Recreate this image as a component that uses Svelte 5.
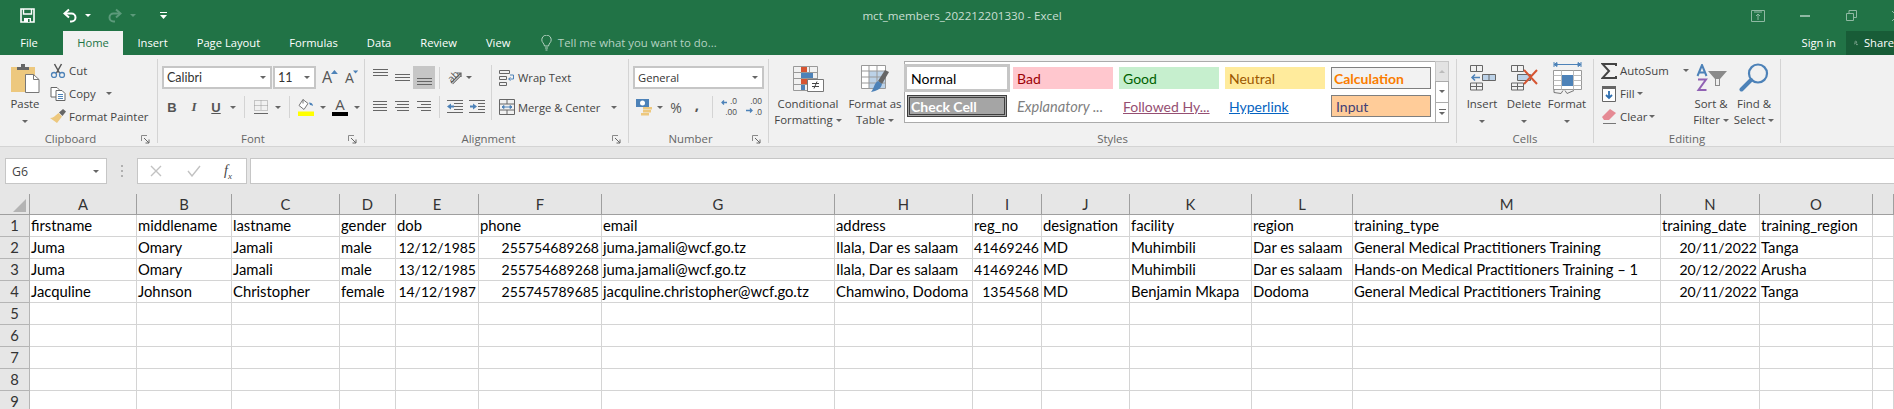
<script>
  const tabs = ["Home", "Insert", "Page Layout", "Formulas", "Data", "Review", "View"];
  const cols = ["A", "B", "C", "D", "E", "F", "G", "H", "I", "J", "K", "L", "M", "N", "O", ""];

  const rows = [
    ["firstname", "middlename", "lastname", "gender", "dob", "phone", "email", "address", "reg_no", "designation", "facility", "region", "training_type", "training_date", "training_region", ""],
    ["Juma", "Omary", "Jamali", "male", "12/12/1985", "255754689268", "juma.jamali@wcf.go.tz", "Ilala, Dar es salaam", "41469246", "MD", "Muhimbili", "Dar es salaam", "General Medical Practitioners Training", "20/11/2022", "Tanga", ""],
    ["Juma", "Omary", "Jamali", "male", "13/12/1985", "255754689268", "juma.jamali@wcf.go.tz", "Ilala, Dar es salaam", "41469246", "MD", "Muhimbili", "Dar es salaam", "Hands-on Medical Practitioners Training – 1", "20/12/2022", "Arusha", ""],
    ["Jacquline", "Johnson", "Christopher", "female", "14/12/1987", "255745789685", "jacquline.christopher@wcf.go.tz", "Chamwino, Dodoma", "1354568", "MD", "Benjamin Mkapa", "Dodoma", "General Medical Practitioners Training", "20/11/2022", "Tanga", ""],
    [], [], [], [], []
  ];

  const rightCols = [4, 5, 8, 13];
  const isRight = (r, c) => r > 0 && rightCols.includes(c);
</script>

{#snippet launcher()}
  <span class="launcher">
    <svg width="9" height="9" viewBox="0 0 9 9"><path d="M.5 6V.5H6" fill="none" stroke="#8a8a8a"/><path d="M3 3l5 5M8 4.5V8H4.5" fill="none" stroke="#666"/></svg>
  </span>
{/snippet}

{#snippet lines(a, b, c, d)}
  <svg width="16" height="14" viewBox="0 0 16 14">
    <path d="M{a} 1.5H15M{b} 4.5H15M{c} 7.5H15M{d} 10.5H15" stroke="#666" />
  </svg>
{/snippet}

<div class="app">
  <header class="titlebar">
    <div class="qat">
      <svg class="save" width="15" height="15" viewBox="0 0 15 15"><path d="M1 1h13v13H1z" fill="none" stroke="#fff" stroke-width="1.6"/><path d="M3.5 1v5h8V1" fill="none" stroke="#fff" stroke-width="1.4"/><path d="M4 10h7v4H4z" fill="#fff"/><path d="M8 11h1.6v3H8z" fill="#217346"/></svg>
      <svg class="undo" width="16" height="15" viewBox="0 0 16 15"><path d="M7 1.5L2.5 5.5 7 9.5" fill="none" stroke="#fff" stroke-width="2"/><path d="M3 5.5h6.5a4 4 0 0 1 0 8H8" fill="none" stroke="#fff" stroke-width="2"/></svg>
      <span class="caret white undo-caret"></span>
      <svg class="redo" width="16" height="15" viewBox="0 0 16 15"><path d="M9 1.5l4.500 4L9 9.500" fill="none" stroke="#5c9a7b" stroke-width="2"/><path d="M13 5.500H6.500a4 4 0 0 0 0 8H8" fill="none" stroke="#5c9a7b" stroke-width="2"/></svg>
      <span class="caret dim redo-caret"></span>
      <svg class="custom" width="7" height="8" viewBox="0 0 7 8"><path d="M0 .5h7" stroke="#fff"/><path d="M0 3h7L3.500 7z" fill="#fff"/></svg>
    </div>
    <div class="doc-title">mct_members_202212201330 - Excel</div>
    <div class="winctl">
      <span class="wbtn first">
        <svg width="14" height="12" viewBox="0 0 14 12"><path d="M.5.5h13v11H.5z" fill="none" stroke="#8fb9a3"/><path d="M3 2h8M7 10V4M5 6l2-2 2 2" fill="none" stroke="#8fb9a3"/></svg>
      </span>
      <span class="wbtn min">
        <svg width="10" height="2" viewBox="0 0 10 2"><path d="M0 1h10" stroke="#8fb9a3" stroke-width="2"/></svg>
      </span>
      <span class="wbtn">
        <svg width="11" height="11" viewBox="0 0 11 11"><path d="M.5 3.500h7v7h-7zM3 3.500v-3h7.500v7H7.500" fill="none" stroke="#8fb9a3"/></svg>
      </span>
      <span class="wbtn">
        <svg width="10" height="10" viewBox="0 0 10 10"><path d="M0 0l10 10M10 0L0 10" stroke="#8fb9a3"/></svg>
      </span>
    </div>
  </header>

  <nav class="tabbar">
    <span class="file">File</span>
    {#each tabs as tab, i}
      <span class="tab" class:active={i === 0}>{tab}</span>
    {/each}
    <span class="tell">
      <svg width="11" height="16" viewBox="0 0 11 16"><path d="M3.500 11C3 8 .8 7.500.8 4.800a4.700 4.700 0 0 1 9.400 0C10.200 7.500 8 8 7.500 11zM4 13h3M4.500 15h2" fill="none" stroke="#b5d2c2"/></svg>
      Tell me what you want to do...
    </span>
    <span class="signin">Sign in</span>
    <span class="share">
      <svg width="16" height="18" viewBox="0 0 16 18"><circle cx="7" cy="5.500" r="4" fill="none" stroke="#fff" stroke-width="1.300"/><path d="M1 15c0-4 2.500-5.500 4.500-6M9 9l2 1M9 15h6M12 12v6" fill="none" stroke="#fff" stroke-width="1.300"/></svg>
      Share
    </span>
  </nav>

  <section class="ribbon">
    <div class="group g-clip">
      <div class="body">
        <div class="big paste">
          <div class="big-icon">
            <svg width="29" height="30" viewBox="0 0 29 30">
              <path d="M0 4h24v25H0z" fill="#edc87e" />
              <path d="M6 4h12v3H6zM10 1h4v4h-4z" fill="#666" />
              <path d="M14.500 11.500h8l5.500 5v13H14.500z" fill="#fff" stroke="#777" />
              <path d="M22.500 11.500v5H28" fill="none" stroke="#777" />
            </svg>
          </div>
          <span>Paste</span>
          <span class="line"><span class="caret"></span></span>
        </div>
        <div class="smalls">
          <div class="small">
            <svg width="15" height="15" viewBox="0 0 15 15"><path d="M4 1l5 9M11 1L6 10" stroke="#555" stroke-width="1.500"/><circle cx="3.500" cy="12" r="2.500" fill="none" stroke="#4d82b8" stroke-width="1.300"/><circle cx="11.500" cy="12" r="2.500" fill="none" stroke="#4d82b8" stroke-width="1.300"/></svg>
            <span>Cut</span>
          </div>
          <div class="small">
            <svg width="15" height="14" viewBox="0 0 15 14"><path d="M.5.5h6l2 2V10H.5z" fill="#fff" stroke="#666"/><path d="M5.500 3.500h6l3 3v7h-9z" fill="#fff" stroke="#666"/><path d="M7.500 7.500h5M7.500 9.500h5M7.500 11.500h5" stroke="#4d82b8"/></svg>
            <span>Copy</span>
            <span class="caret copy-caret"></span>
          </div>
          <div class="small">
            <svg width="16" height="15" viewBox="0 0 16 15"><path d="M8.500 4L12 7.500 7 14 0 9c3 0 5-2 8.500-5z" fill="#edc87e"/><path d="M9 3.500L13 0l3 2.500L12.500 7z" fill="#666"/></svg>
            <span>Format Painter</span>
          </div>
        </div>
      </div>
      <div class="label"><span>Clipboard</span>{@render launcher()}</div>
    </div>

    <div class="group g-font">
      <div class="body stack">
        <div class="row">
          <div class="combo c-font"><span class="lato">Calibri</span><span class="caret"></span></div>
          <div class="combo c-size"><span class="lato">11</span><span class="caret"></span></div>
          <span class="grow-a">A<svg width="7" height="4" viewBox="0 0 7 4"><path d="M0 4l3.500-4L7 4z" fill="#4d82b8"/></svg></span>
          <span class="shrink-a">A<svg width="7" height="4" viewBox="0 0 7 4"><path d="M0 0l3.500 4L7 0z" fill="#4d82b8"/></svg></span>
        </div>
        <div class="row row2 font-tools">
          <span class="slot w22 fmt bold">B</span>
          <span class="slot w22 fmt italic">I</span>
          <span class="slot w22 fmt under">U</span>
          <span class="slot w12"><span class="caret"></span></span>
          <span class="sep s5"></span>
          <span class="slot w22 borders">
            <svg width="14" height="14" viewBox="0 0 14 14"><path d="M.5.500h13v10H.5zM7 .5v10M.5 5.500h13" fill="none" stroke="#999" stroke-dasharray="1 1"/><path d="M0 13.500h14" stroke="#666"/></svg>
          </span>
          <span class="slot w12"><span class="caret"></span></span>
          <span class="sep s5"></span>
          <span class="slot w22 fill">
            <svg width="16" height="17" viewBox="0 0 16 17"><path d="M5 .5l-4 6 5 4 4-6z" fill="#fff" stroke="#777"/><path d="M5 .5v4" stroke="#777"/><path d="M11 3.500c2 0 4 1 4 3.500-1-.5-2-1-3-1z" fill="#4d82b8"/><path d="M0 12.500h16V17H0z" fill="#ffff00"/></svg>
          </span>
          <span class="slot w12"><span class="caret"></span></span>
          <span class="slot w22 color-a"><span>A</span><i></i></span>
          <span class="slot w12"><span class="caret"></span></span>
        </div>
      </div>
      <div class="label"><span>Font</span>{@render launcher()}</div>
    </div>

    <div class="group g-align">
      <div class="body flat">
        <div class="stack left">
          <div class="row">
            <span class="slot w22 valign top"><svg width="15" height="8" viewBox="0 0 15 8"><path d="M0 .5h15M0 3.500h15M0 6.500h15" stroke="#666"/></svg></span>
            <span class="slot w22 valign"><svg width="15" height="8" viewBox="0 0 15 8"><path d="M0 .5h15M0 3.500h15M0 6.500h15" stroke="#666"/></svg></span>
            <span class="slot w22 valign picked"><svg width="15" height="8" viewBox="0 0 15 8"><path d="M0 .5h15M0 3.500h15M0 6.500h15" stroke="#666"/></svg></span>
            <span class="sep s4"></span>
            <span class="slot w22 orient">
              <span class="ab">ab</span>
              <svg width="16" height="16" viewBox="0 0 16 16"><path d="M4 13L14 3M10 3h4v4" fill="none" stroke="#666" stroke-width="1.200"/></svg>
            </span>
            <span class="caret orient-caret"></span>
          </div>
          <div class="row row2">
            <span class="slot w22">{@render lines(1, 1, 1, 1)}</span>
            <span class="slot w22">{@render lines(1, 3, 1, 3)}</span>
            <span class="slot w22">{@render lines(1, 5, 1, 5)}</span>
            <span class="sep s4"></span>
            <span class="slot w22">
              <svg width="16" height="14" viewBox="0 0 16 14"><path d="M0 .5h16M7 3.500h9M7 6.500h9M7 9.500h9M0 12.500h16" stroke="#666"/><path d="M0 6.500L4 3.500v2h3v2H4v2z" fill="#4d82b8"/></svg>
            </span>
            <span class="slot w22">
              <svg width="16" height="14" viewBox="0 0 16 14"><path d="M0 .5h16M9 3.500h7M9 6.500h7M9 9.500h7M0 12.500h16" stroke="#666"/><path d="M8 6.500L4 3.500v2H1v2h3v2z" fill="#4d82b8"/></svg>
            </span>
          </div>
        </div>
        <span class="sep tall"></span>
        <div class="stack">
          <div class="row wrapline">
            <svg width="16" height="16" viewBox="0 0 16 16"><path d="M.5.5h10v3H.5zM.5 6.500h7v3h-7zM.5 12.500h7v3h-7z" fill="none" stroke="#666"/><path d="M11 5h3.500v4H10M11.500 7.500L9.500 9l2 1.500" fill="none" stroke="#4d82b8"/></svg>
            <span>Wrap Text</span>
          </div>
          <div class="row row2 wrapline">
            <svg width="16" height="16" viewBox="0 0 16 16"><path d="M.5.5h15v15H.5zM.5 5h15M.5 11h15M8 .5V5M8 11v4.500" fill="none" stroke="#666"/><path d="M3 8h10M3 8l2-1.500v3zM13 8l-2-1.500v3z" fill="#4d82b8" stroke="#4d82b8"/></svg>
            <span>Merge &amp; Center</span>
            <span class="caret merge-caret"></span>
          </div>
        </div>
      </div>
      <div class="label"><span>Alignment</span>{@render launcher()}</div>
    </div>

    <div class="group g-num">
      <div class="body stack">
        <div class="row">
          <div class="combo c-num"><span class="sm">General</span><span class="caret"></span></div>
        </div>
        <div class="row row2">
          <span class="slot w22">
            <svg width="17" height="17" viewBox="0 0 17 17"><path d="M0 0h13v8H0z" fill="#4d82b8"/><circle cx="6.500" cy="4" r="2.500" fill="#fff"/><path d="M7 8h9v2.500H7zM7 11h8v2.500H7zM5 14h8v2.500H5z" fill="#edc87e"/></svg>
          </span>
          <span class="slot w10"><span class="caret"></span></span>
          <span class="slot w22 glyph percent">%</span>
          <span class="slot w20 glyph comma">,</span>
          <span class="sep s5"></span>
          <span class="slot w22 decs">
            <svg width="16" height="15" viewBox="0 0 16 15"><path d="M1 3.500h5M3 1.500l-2 2 2 2" fill="none" stroke="#4d82b8" stroke-width="1.300"/></svg>
            <span class="dec a">.0</span><span class="dec b">.00</span>
          </span>
          <span class="gap3"></span>
          <span class="slot w22 decs">
            <svg width="16" height="15" viewBox="0 0 16 15"><path d="M0 11.500h6M4 9.500l2 2-2 2" fill="none" stroke="#4d82b8" stroke-width="1.300"/></svg>
            <span class="dec a">.00</span><span class="dec b">.0</span>
          </span>
        </div>
      </div>
      <div class="label"><span>Number</span>{@render launcher()}</div>
    </div>

    <div class="group g-styles">
      <div class="body flat">
        <div class="big cond">
          <div class="big-icon">
            <svg width="31" height="26" viewBox="0 0 31 26">
              <path d="M.5.500h24v24H.5zM8.500.5v24M16.500.5v24M.5 6.500h24M.5 12.500h24M.5 18.500h24" fill="none" stroke="#999"/>
              <path d="M8 1h6v5H8z" fill="#d65532"/><path d="M8 7h12v5H8z" fill="#4d82b8"/><path d="M8 13h9v5H8z" fill="#d65532"/><path d="M8 19h4v5H8z" fill="#4d82b8"/>
              <path d="M14.500 13.500h16v12h-16z" fill="#fff" stroke="#777"/><path d="M19 17.500h7M19 20.500h7M24 15.500l-3 7" stroke="#444"/>
            </svg>
          </div>
          <span>Conditional</span>
          <span>Formatting<span class="caret inl"></span></span>
        </div>
        <div class="big astable">
          <div class="big-icon">
            <svg width="29" height="28" viewBox="0 0 29 28">
              <path d="M.5.500h24v23H.5z" fill="#fff" stroke="#999"/>
              <path d="M8 6h16v17H8z" fill="#bcd2e8"/>
              <path d="M.5 6h24M.5 12h24M.5 18h24M8 .5v23M16 .5v23" stroke="#999"/>
              <path d="M28 7L21 19l-4-3 7-11z" fill="#666"/>
              <path d="M17 16l4 3c-1 5-5 7-11 8 3-3 3-9 7-11z" fill="#4d82b8"/>
            </svg>
          </div>
          <span>Format as</span>
          <span>Table<span class="caret inl"></span></span>
        </div>
        <div class="gallery">
          <div class="swatches">
            <span class="cell normal">Normal</span>
            <span class="cell bad">Bad</span>
            <span class="cell good">Good</span>
            <span class="cell neutral">Neutral</span>
            <span class="cell calc">Calculation</span>
            <span class="cell check">Check Cell</span>
            <span class="cell expl">Explanatory ...</span>
            <span class="cell followed"><u>Followed Hy...</u></span>
            <span class="cell link"><u>Hyperlink</u></span>
            <span class="cell input">Input</span>
          </div>
          <div class="scroll">
            <span class="off"><span class="caret up pale"></span></span>
            <span><span class="caret"></span></span>
            <span class="more"><i></i><span class="caret"></span></span>
          </div>
        </div>
      </div>
      <div class="label"><span>Styles</span></div>
    </div>

    <div class="group g-cells">
      <div class="body flat">
        <div class="big cellbtn">
          <div class="big-icon">
            <svg width="27" height="27" viewBox="0 0 27 27"><path d="M1.500 1.500h12v6h-12zM7.500 1.500v6M1.500 19h12v7h-12zM1.500 22.500h12M7.500 19v7" fill="none" stroke="#666"/><path d="M13.500 10.500h13v6h-13zM20 10.500v6" fill="#bcd2e8" stroke="#666"/><path d="M11 13.500H3M6 10.500l-3 3 3 3" fill="none" stroke="#4d82b8" stroke-width="1.500"/></svg>
          </div>
          <span>Insert</span>
          <span class="line"><span class="caret"></span></span>
        </div>
        <div class="big cellbtn">
          <div class="big-icon">
            <svg width="29" height="27" viewBox="0 0 29 27"><path d="M1.500 1.500h12v6h-12zM7.500 1.500v6M1.500 19h12v7h-12zM1.500 22.500h12M7.500 19v7" fill="none" stroke="#666"/><path d="M7.500 10.500h13v6h-13z" fill="#bcd2e8" stroke="#666"/><path d="M14 6l13 14M27 6L14 20" stroke="#d65532" stroke-width="2"/></svg>
          </div>
          <span>Delete</span>
          <span class="line"><span class="caret"></span></span>
        </div>
        <div class="big cellbtn fmtbtn">
          <div class="big-icon">
            <svg width="29" height="33" viewBox="0 0 29 33"><path d="M1 3.500h27M1 1v5M28 1v5M1 3.500l3-2v4zM28 3.500l-3-2v4z" fill="#4d82b8" stroke="#4d82b8"/><path d="M.5 9.500h28v19H.5z" fill="#fff" stroke="#999"/><path d="M.5 14.500h28M.5 19.500h28M.5 24.500h28M8.500 9.500v19M20.500 9.500v19" stroke="#bbb"/><path d="M9 14h11v11H9z" fill="#4d82b8"/><path d="M1 28.500v3l7 1 2-3M12 29.500l2 3 7-3" fill="none" stroke="#777"/></svg>
          </div>
          <span>Format</span>
          <span class="line"><span class="caret"></span></span>
        </div>
      </div>
      <div class="label"><span>Cells</span></div>
    </div>

    <div class="group g-edit">
      <div class="body flat">
        <div class="smalls">
          <div class="small">
            <svg width="16" height="16" viewBox="0 0 16 16"><path d="M15 3V1H1.500L8 8l-6.500 7H15v-2" fill="none" stroke="#444" stroke-width="2"/></svg>
            <span>AutoSum</span>
            <span class="caret sum-caret"></span>
          </div>
          <div class="small">
            <svg width="16" height="16" viewBox="0 0 16 16"><path d="M1.500.5h13v15h-13z" fill="#fff" stroke="#666"/><path d="M1 0h14v3H1z" fill="#666"/><path d="M8 5v7M5 9l3 3 3-3" fill="none" stroke="#2f6fb0" stroke-width="1.800"/></svg>
            <span>Fill</span>
            <span class="caret fill-caret"></span>
          </div>
          <div class="small">
            <svg width="16" height="15" viewBox="0 0 16 15"><path d="M9 0l6 4-7 7H3L1 8z" fill="#e58a94"/><path d="M2 14.500h13" stroke="#777"/></svg>
            <span>Clear</span>
            <span class="caret fill-caret"></span>
          </div>
        </div>
        <div class="big sortbtn">
          <div class="big-icon">
            <svg width="31" height="28" viewBox="0 0 31 28">
              <path d="M1.500 12L6 1l4.500 11M3 8.500h6" fill="none" stroke="#4d82b8" stroke-width="2"/>
              <path d="M2 15.500h8L2.500 26h8" fill="none" stroke="#9162b4" stroke-width="2"/>
              <path d="M12 7h19l-7 8v7h-5v-7z" fill="#8a8a8a"/><path d="M20 15h3v6h-3z" fill="#eee"/>
            </svg>
          </div>
          <span>Sort &amp;</span>
          <span>Filter<span class="caret inl"></span></span>
        </div>
        <div class="big findbtn">
          <div class="big-icon">
            <svg width="30" height="29" viewBox="0 0 30 29"><circle cx="19" cy="10.500" r="9" fill="none" stroke="#4d82b8" stroke-width="2.200"/><path d="M12 17L2.500 26.500" stroke="#4d82b8" stroke-width="4" stroke-linecap="round"/></svg>
          </div>
          <span>Find &amp;</span>
          <span>Select<span class="caret inl"></span></span>
        </div>
      </div>
      <div class="label"><span>Editing</span></div>
    </div>
  </section>

  <section class="formula">
    <div class="namebox"><span>G6</span><span class="caret"></span></div>
    <svg class="grip" width="3" height="12" viewBox="0 0 3 12"><path d="M1 0h2v2H1zM1 5h2v2H1zM1 10h2v2H1z" fill="#b0b0b0"/></svg>
    <div class="fxbox">
      <svg width="12" height="12" viewBox="0 0 12 12"><path d="M1 1l10 10M11 1L1 11" stroke="#c2c2c2" stroke-width="1.400"/></svg>
      <svg width="14" height="12" viewBox="0 0 14 12"><path d="M1 6l4 5 8-10" fill="none" stroke="#c2c2c2" stroke-width="1.400"/></svg>
      <span class="fx">f<sub>x</sub></span>
    </div>
    <div class="fxinput"></div>
  </section>

  <section class="sheet">
    <div class="corner">
      <svg width="13" height="13" viewBox="0 0 13 13"><path d="M13 0v13H0z" fill="#b4b4b4"/></svg>
    </div>
    {#each cols as col}
      <div class="colhead">{col}</div>
    {/each}
    {#each rows as row, r}
      <div class="rowhead">{r + 1}</div>
      {#each cols as _, c}
        <div class="cell-d" class:right={isRight(r, c)}>{row[c] ?? ""}</div>
      {/each}
    {/each}
  </section>
</div>

<style>
  :global(body) {
    margin: 0;
    background: #fff;
  }
  .app {
    width: 1894px;
    height: 409px;
    overflow: hidden;
    font-family: "Open Sans", sans-serif;
    font-size: 11.4px;
    color: #444;
  }

  .titlebar {
    height: 31px;
    background: #217346;
    display: flex;
    align-items: center;
    width: 1950px;
  }
  .qat {
    width: 172px;
    flex: none;
    display: flex;
    align-items: center;
    padding-left: 20px;
    box-sizing: border-box;
  }
  .undo { margin-left: 27px; }
  .undo-caret { margin-left: 7px; }
  .redo { margin-left: 16px; }
  .redo-caret { margin-left: 7px; }
  .custom { margin-left: 24px; }
  .doc-title {
    width: 1572px;
    flex: none;
    box-sizing: border-box;
    padding-left: 8px;
    text-align: center;
    color: #c9dfd3;
    font-size: 11.6px;
  }
  .winctl {
    display: flex;
    align-items: center;
  }
  .wbtn {
    width: 46px;
    display: flex;
    justify-content: center;
  }
  .wbtn.first { width: 28px; }
  .wbtn.min { margin-left: 10px; }

  .tabbar {
    height: 24px;
    background: #217346;
    display: flex;
    align-items: stretch;
    color: #fff;
    font-size: 11.2px;
    line-height: 24px;
  }
  .file {
    width: 63px;
    padding-right: 5px;
    box-sizing: border-box;
    text-align: center;
  }
  .tab {
    padding: 0 14.5px;
  }
  .tab.active {
    background: #f1f1f1;
    color: #217346;
    padding: 0 13px;
    width: 60px;
    box-sizing: border-box;
    text-align: center;
  }
  .tell {
    margin-left: 16px;
    color: #b5d2c2;
    display: flex;
    align-items: center;
    gap: 6px;
    font-size: 11.4px;
  }
  .signin { margin-left: auto; }
  .share {
    margin-left: 10px;
    width: 48px;
    background: #185c37;
    padding-left: 8px;
    box-sizing: border-box;
    display: flex;
    align-items: center;
    gap: 6px;
    white-space: nowrap;
    overflow: hidden;
    flex: none;
  }

  .ribbon {
    height: 92px;
    background: #f1f1f1;
    border-bottom: 1px solid #d4d4d4;
    box-sizing: border-box;
    padding-top: 4px;
    display: flex;
    align-items: flex-start;
  }
  .group {
    flex: none;
    height: 84px;
    border-right: 1px solid #d4d4d4;
    box-sizing: border-box;
    display: flex;
    flex-direction: column;
  }
  .g-clip { width: 158px; }
  .g-font { width: 207px; }
  .g-align { width: 264px; }
  .g-num { width: 140px; }
  .g-styles { width: 688px; }
  .g-cells { width: 137px; }
  .g-edit { width: 187px; }
  .body {
    flex: none;
    height: 72px;
    display: flex;
  }
  .stack {
    flex-direction: column;
    display: flex;
    padding-top: 7px;
    box-sizing: border-box;
  }
  .label {
    flex: none;
    height: 16px;
    line-height: 16px;
    display: flex;
    color: #666;
  }
  .label > span:first-child {
    flex: 1;
    text-align: center;
  }
  .launcher {
    width: 16px;
    display: flex;
    align-items: center;
  }

  .caret {
    display: inline-block;
    width: 0;
    height: 0;
    border-left: 3.5px solid transparent;
    border-right: 3.5px solid transparent;
    border-top: 3.5px solid #666;
    flex: none;
  }
  .caret.white { border-top-color: #fff; }
  .caret.dim { border-top-color: #5c9a7b; }
  .caret.up {
    border-top: 0;
    border-bottom: 3.5px solid #666;
  }
  .caret.pale { border-bottom-color: #bbb; }
  .caret.inl {
    margin-left: 3px;
    vertical-align: middle;
  }

  .big {
    display: flex;
    flex-direction: column;
    align-items: center;
    line-height: 16px;
    flex: none;
    white-space: nowrap;
  }
  .big-icon {
    height: 37px;
    display: flex;
    align-items: center;
    justify-content: center;
  }
  .line {
    height: 16px;
    display: flex;
    align-items: center;
    padding-top: 2px;
    box-sizing: border-box;
  }
  .paste { width: 50px; }
  .smalls {
    flex: none;
    display: flex;
    flex-direction: column;
  }
  .small {
    height: 23px;
    display: flex;
    align-items: center;
    white-space: nowrap;
  }
  .small svg { width: 16px; flex: none; margin-right: 3px; }
  .copy-caret { margin-left: 10px; }

  .row {
    display: flex;
    align-items: center;
    height: 23px;
  }
  .row2 {
    margin-top: 7px;
    height: 22px;
  }
  .slot {
    display: flex;
    align-items: center;
    justify-content: center;
    height: 22px;
    flex: none;
  }
  .w10 { width: 10px; }
  .w12 { width: 12px; }
  .w20 { width: 20px; }
  .w22 { width: 22px; }
  .gap3 { width: 3px; }
  .sep {
    width: 1px;
    height: 22px;
    background: #d4d4d4;
    flex: none;
  }
  .s4 { margin: 0 4px; }
  .s5 { margin: 0 5px; }
  .sep.tall {
    height: 55px;
    margin: 6px 7px 0 3px;
  }

  .lato { font-family: Lato, sans-serif; font-size: 12.5px; color: #333; }
  .combo {
    height: 23px;
    background: #fff;
    border: 2px solid #c6c6c6;
    box-sizing: border-box;
    display: flex;
    align-items: center;
    justify-content: space-between;
    padding: 0 4px 0 3px;
    flex: none;
  }
  .g-font .body { padding-left: 4px; }
  .c-font { width: 110px; }
  .c-size { width: 43px; margin-left: 1px; }
  .grow-a, .shrink-a {
    display: flex;
    align-items: flex-start;
    font-size: 16px;
    line-height: 23px;
    color: #555;
    height: 23px;
    flex: none;
  }
  .grow-a { margin-left: 6px; width: 16px; }
  .shrink-a { margin-left: 7px; font-size: 14px; width: 13px; }
  .grow-a svg, .shrink-a svg { margin-top: 4px; margin-left: -1px; }
  .font-tools { margin-left: -1px; }
  .fmt {
    font-family: "Liberation Sans", sans-serif;
    font-size: 13px;
    color: #555;
  }
  .bold { font-weight: 700; }
  .italic { font-style: italic; font-family: "Liberation Serif", serif; font-weight: 700; }
  .under { text-decoration: underline; font-weight: 700; }
  .color-a {
    flex-direction: column;
    font-size: 15px;
    line-height: 13px;
    color: #555;
  }
  .color-a i {
    display: block;
    width: 16px;
    height: 4px;
    background: #000;
    margin-top: 1px;
  }

  .g-align .body { padding-left: 4px; }
  .flat { align-items: flex-start; }
  .left { flex: none; }
  .valign { padding: 0; height: 23px; box-sizing: border-box; }
  .valign.top { align-items: flex-start; padding-top: 3px; }
  .valign.picked {
    background: #c6c6c6;
    align-items: flex-end;
    padding-bottom: 3px;
  }
  .orient { position: relative; }
  .ab {
    font-size: 10px;
    transform: rotate(-45deg);
    color: #555;
    position: absolute;
    left: 3px;
    top: 2px;
    text-decoration: underline;
  }
  .orient-caret { margin-left: 0; }
  .wrapline svg { margin-right: 3px; flex: none; }
  .wrapline { font-size: 11.2px; }
  .merge-caret { margin-left: 11px; }

  .g-num .body { padding-left: 4px; }
  .c-num { width: 131px; }
  .sm { font-size: 11.2px; color: #333; }
  .percent { font-size: 14px; color: #555; }
  .comma { font-size: 15px; font-weight: 700; color: #555; padding-bottom: 6px; box-sizing: border-box; }
  .decs {
    position: relative;
    font-family: "Liberation Sans", sans-serif;
    font-size: 8.5px;
    color: #555;
    line-height: 10px;
  }
  .decs svg { position: absolute; left: 3px; top: 3px; }
  .dec { position: absolute; right: 3px; }
  .dec.a { top: 0; }
  .dec.b { top: 11px; }

  .cond { width: 72px; margin-left: 3px; }
  .astable { width: 58px; margin-left: 2px; }
  .cond .big-icon, .astable .big-icon { align-items: center; padding-top: 2px; box-sizing: border-box; }
  .gallery {
    width: 547px;
    height: 62px;
    margin-top: 2px;
    display: flex;
    flex: none;
    box-sizing: border-box;
  }
  .swatches {
    width: 532px;
    height: 62px;
    flex: none;
    background: #fff;
    border: 1px solid #ababab;
    box-sizing: border-box;
    padding: 5px 0 0 2px;
    display: grid;
    grid-template-columns: repeat(5, 100px);
    grid-auto-rows: 22px;
    gap: 6px;
    font-family: Lato, sans-serif;
    font-size: 14px;
  }
  .cell {
    display: flex;
    align-items: center;
    padding-left: 4px;
    box-sizing: border-box;
    white-space: nowrap;
  }
  .normal { outline: 3px solid #c6c6c6; color: #000; }
  .bad { background: #ffc7ce; color: #9c0006; }
  .good { background: #c6efce; color: #006100; }
  .neutral { background: #ffeb9c; color: #9c5700; }
  .calc { background: #f2f2f2; color: #fa7d00; font-weight: 700; border: 1px solid #7f7f7f; padding-left: 2px; }
  .check { background: #a5a5a5; color: #fff; font-weight: 700; border: 3px double #3f3f3f; padding-left: 1px; }
  .expl { color: #7f7f7f; font-style: italic; font-size: 14.6px; }
  .followed { color: #954f72; }
  .link { color: #0563c1; }
  .input { background: #ffcc99; color: #3f3f76; border: 1px solid #7f7f7f; }
  .scroll {
    width: 14px;
    flex: none;
    display: flex;
    flex-direction: column;
    height: 62px;
    margin-left: -1px;
  }
  .scroll > span {
    flex: 1;
    background: #fff;
    border: 1px solid #ababab;
    margin-top: -1px;
    display: flex;
    flex-direction: column;
    gap: 2px;
    align-items: center;
    justify-content: center;
  }
  .scroll > span:first-child { margin-top: 0; }
  .scroll .off { background: #e3e3e3; border-color: #c6c6c6; }
  .scroll i { width: 7px; height: 1px; background: #666; }

  .g-cells .body { padding-left: 4px; }
  .cellbtn { width: 42px; }
  .fmtbtn { margin-left: 1px; }
  .g-edit .smalls { width: 95px; padding-left: 7px; box-sizing: border-box; }
  .sum-caret { margin-left: 14px; }
  .fill-caret { margin-left: 2px; }
  .sortbtn { width: 44px; }
  .findbtn { width: 42px; }

  .formula {
    height: 47px;
    background: #e6e6e6;
    display: flex;
    align-items: flex-start;
    padding-top: 11px;
    box-sizing: border-box;
  }
  .namebox {
    width: 102px;
    height: 26px;
    margin-left: 5px;
    background: #fff;
    border: 1px solid #c6c6c6;
    box-sizing: border-box;
    display: flex;
    align-items: center;
    justify-content: space-between;
    padding: 0 7px 0 6px;
    font-size: 12.3px;
  }
  .grip { margin: 7px 0 0 13px; }
  .fxbox {
    width: 110px;
    height: 26px;
    margin-left: 14px;
    background: #fff;
    border: 1px solid #c6c6c6;
    box-sizing: border-box;
    display: flex;
    align-items: center;
    gap: 25px;
    padding-left: 12px;
  }
  .fx {
    font-family: "Liberation Serif", serif;
    font-style: italic;
    font-size: 14px;
    margin-left: -2px;
  }
  .fx sub { font-size: 9px; line-height: 0; }
  .fxinput {
    flex: 1;
    height: 26px;
    margin-left: 3px;
    background: #fff;
    border: 1px solid #c6c6c6;
    border-right: 0;
    box-sizing: border-box;
  }

  .sheet {
    display: grid;
    grid-template-columns: 30px 107px 95px 108px 56px 83px 123px 233px 138px 69px 88px 122px 101px 308px 99px 113px 1fr;
    grid-template-rows: 21px repeat(9, 22px);
    font-family: Lato, sans-serif;
    font-size: 14.8px;
    color: #000;
  }
  .corner {
    background: #e6e6e6;
    border-bottom: 1px solid #9f9f9f;
    border-right: 1px solid #9f9f9f;
    box-sizing: border-box;
    display: flex;
    justify-content: flex-end;
    align-items: flex-end;
    padding: 0 3px 2px 0;
  }
  .colhead {
    background: #e6e6e6;
    border-right: 1px solid #9f9f9f;
    border-bottom: 1px solid #9f9f9f;
    box-sizing: border-box;
    text-align: center;
    line-height: 21px;
    color: #333;
  }
  .rowhead {
    background: #e6e6e6;
    border-right: 1px solid #b5b5b5;
    border-bottom: 1px solid #b5b5b5;
    box-sizing: border-box;
    text-align: center;
    line-height: 21px;
    color: #333;
  }
  .cell-d {
    border-right: 1px solid #d4d4d4;
    border-bottom: 1px solid #d4d4d4;
    box-sizing: border-box;
    padding: 0 2px 0 1px;
    line-height: 21px;
    white-space: nowrap;
    overflow: visible;
  }
  .cell-d.right {
    text-align: right;
    font-size: 14px;
  }
</style>
